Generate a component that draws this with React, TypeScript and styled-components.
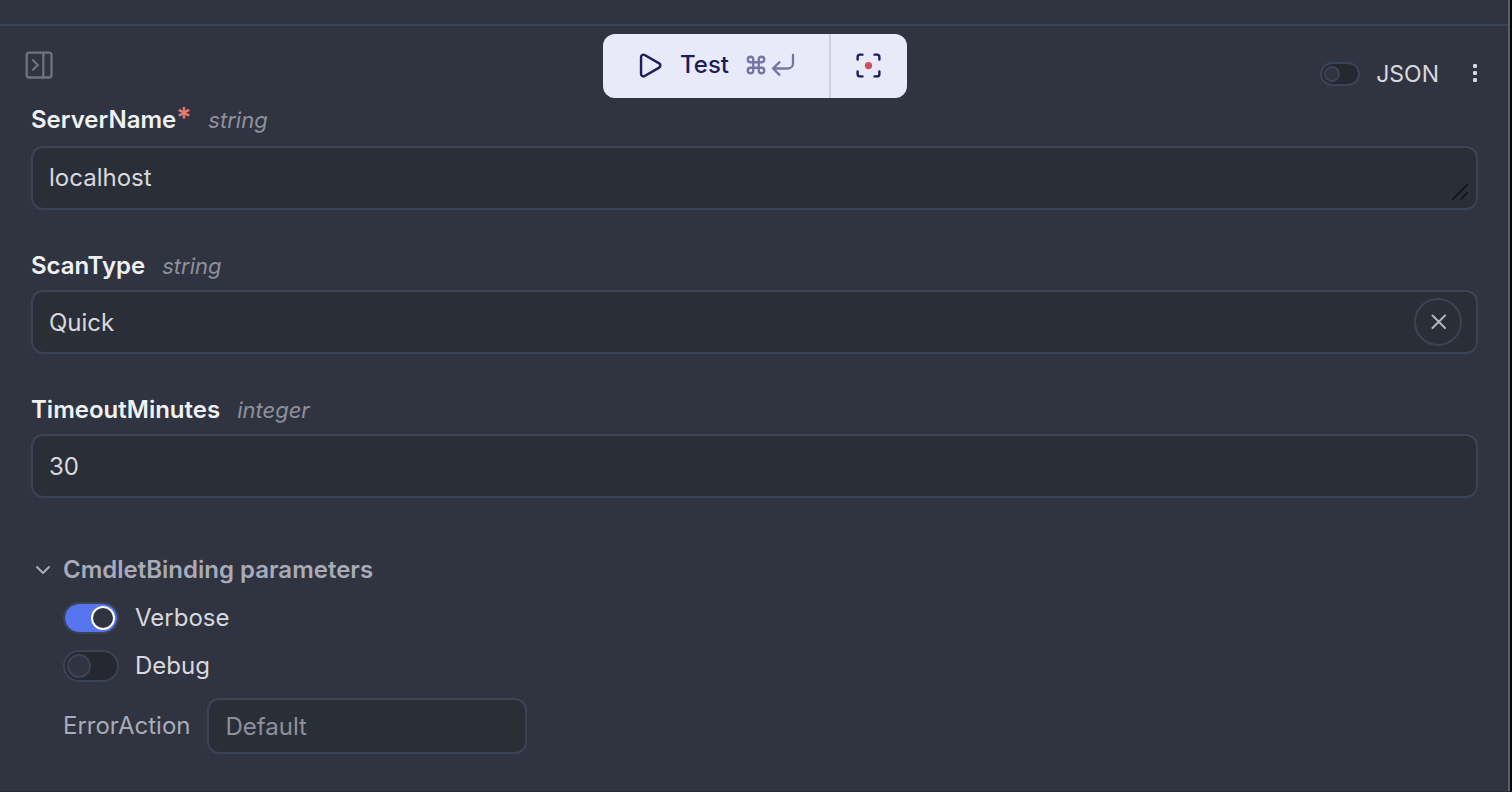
import React, { useState } from "react";
import styled, { createGlobalStyle } from "styled-components";
import { Command, Scan, Play } from "lucide-react";

const GlobalStyle = createGlobalStyle`
  *, *::before, *::after { box-sizing: border-box; }
  body {
    margin: 0;
    background: #303440;
    color: #d8d9de;
    font-family: Inter, "Liberation Sans", sans-serif;
    font-size: 24px;
    line-height: 32px;
  }
  button, input, textarea { font: inherit; color: inherit; margin: 0; }
  button { padding: 0; border: 0; background: none; cursor: pointer; }
  svg { display: block; flex: none; }
`;

const Page = styled.div`
  min-height: 100vh;
  display: flex;
  flex-direction: column;
  border-right: 2px solid #08090b;
  border-bottom: 1px solid #2a2b34;
`;

const Panel = styled.main`
  flex: 1;
  border-right: 2px solid #5b5d67;
`;

const TopStrip = styled.div`
  height: 26px;
  border-bottom: 2px solid #3b4455;
`;

const Toolbar = styled.header`
  display: grid;
  grid-template-columns: 1fr auto 1fr;
  align-items: center;
  padding: 8px 23px 0 25px;
`;

const CollapseButton = styled.button`
  justify-self: start;
  padding-bottom: 2px;
  color: #6f727f;
`;

const TestGroup = styled.div`
  display: flex;
  height: 64px;
  border-radius: 12px;
  overflow: hidden;
  background: #e8eafa;
  color: #1b1d5c;
`;

const TestButton = styled.button`
  display: flex;
  align-items: center;
  gap: 16px;
  padding: 0 34px 2px 32px;
  font-weight: 500;
`;

const Shortcut = styled.span`
  display: flex;
  align-items: center;
  gap: 4px;
  color: #7375a3;
`;

const CaptureButton = styled.button`
  display: flex;
  align-items: center;
  justify-content: center;
  width: 78px;
  padding-bottom: 2px;
  border-left: 2px solid #d0d1d9;
`;

const ViewOptions = styled.div`
  justify-self: end;
  display: flex;
  align-items: center;
  gap: 26px;
  padding-top: 16px;
`;

const MenuButton = styled.button`
  display: flex;
  justify-content: center;
  width: 20px;
  padding-bottom: 2px;
`;

const SwitchLabel = styled.label<{ $small?: boolean }>`
  display: flex;
  align-items: center;
  gap: 16px;
  font-size: ${(p) => (p.$small ? 23 : 24)}px;
  cursor: pointer;
`;

const Switch = styled.input.attrs({ type: "checkbox", role: "switch" })<{ $small?: boolean }>`
  appearance: none;
  display: flex;
  align-items: center;
  flex: none;
  width: ${(p) => (p.$small ? 40 : 56)}px;
  height: ${(p) => (p.$small ? 24 : 32)}px;
  padding: 0 2px;
  border: 2px solid #3b4455;
  border-radius: 16px;
  background: #262831;
  cursor: pointer;

  &::before {
    content: "";
    width: ${(p) => (p.$small ? 16 : 24)}px;
    height: ${(p) => (p.$small ? 16 : 24)}px;
    border: 2px solid #3b4455;
    border-radius: 50%;
    background: #303440;
  }
  &:checked {
    justify-content: flex-end;
    background: #5875f0;
    background-clip: padding-box;
  }
  &:checked::before { border-color: #ffffff; }
`;

const Form = styled.form`
  padding: 6px 30px 36px 31px;
`;

const Field = styled.div<{ $gap?: number }>`
  display: flex;
  flex-direction: column;
  gap: ${(p) => p.$gap ?? 8}px;
  margin-bottom: 40px;
`;

const FieldHead = styled.div`
  display: flex;
  align-items: baseline;
  gap: 17px;
`;

const FieldLabel = styled.label`
  font-weight: 600;
  color: #f0f1f4;
`;

const Required = styled.span`
  font-size: 28px;
  line-height: 0;
  color: #ea7a74;
`;

const TypeName = styled.span`
  font-size: 22px;
  font-style: italic;
  color: #8e919c;
`;

const Control = styled.div`
  position: relative;
  display: flex;
`;

const TextInput = styled.input`
  flex: 1;
  min-width: 0;
  height: 64px;
  padding: 0 16px;
  border: 2px solid #3b4455;
  border-radius: 12px;
  background: #2a2e37;
  outline: none;
`;

const TextArea = styled(TextInput).attrs({ as: "textarea" })`
  padding: 14px 16px;
  resize: none;
  overflow: hidden;
`;

const ResizeGrip = styled.svg`
  position: absolute;
  right: 9px;
  bottom: 9px;
  color: #14161b;
`;

const ClearButton = styled.button`
  position: absolute;
  right: 16px;
  top: 8px;
  display: flex;
  align-items: center;
  justify-content: center;
  width: 48px;
  height: 48px;
  border: 2px solid #3b4455;
  border-radius: 50%;
  color: #b4b6c0;
`;

const Section = styled.section`
  padding-top: 16px;
`;

const SectionToggle = styled.button`
  display: flex;
  align-items: center;
  gap: 8px;
  font-weight: 600;
  color: #a9acb8;
`;

const SectionBody = styled.div`
  display: flex;
  flex-direction: column;
  align-items: flex-start;
  gap: 16px;
  padding: 16px 0 0 32px;
`;

const InlineField = styled.div`
  display: flex;
  align-items: center;
  gap: 17px;
`;

const InlineLabel = styled.label`
  color: #a9acb8;
`;

const CompactInput = styled(TextInput)`
  flex: none;
  width: 320px;
  height: 56px;
  &::placeholder { color: #8e919c; opacity: 1; }
`;

const stroke = {
  fill: "none",
  stroke: "currentColor",
  strokeWidth: 2,
  strokeLinecap: "round" as const,
  strokeLinejoin: "round" as const,
};

export default function App() {
  const [scanType, setScanType] = useState("Quick");
  const [open, setOpen] = useState(true);

  return (
    <>
      <GlobalStyle />
      <Page>
        <Panel>
          <TopStrip />
          <Toolbar>
            <CollapseButton type="button" aria-label="Collapse panel">
              <svg width="28" height="28" viewBox="0 0 28 28" {...stroke} strokeWidth={2.3}>
                <rect x="1.7" y="1.7" width="24.8" height="24.8" rx="2.5" />
                <path d="M18.3 2v24.500M8 9.300l4.800 4.700L8 18.700" />
              </svg>
            </CollapseButton>
            <TestGroup>
              <TestButton type="button">
                <Play size={29} strokeWidth={2} />
                Test
                <Shortcut>
                  <Command size={22} strokeWidth={2.5} />
                  <svg width="24" height="24" viewBox="0 0 24 24" {...stroke} strokeWidth={2.3}>
                    <path d="M22 2v8.500a5 5 0 0 1-5 5H2M8.500 9.200L2 15.500l6.500 6.300" />
                  </svg>
                </Shortcut>
              </TestButton>
              <CaptureButton type="button" aria-label="Capture">
                <Scan size={29} strokeWidth={2}>
                  <circle cx="12" cy="12" r="3" fill="#cd5158" stroke="none" />
                </Scan>
              </CaptureButton>
            </TestGroup>
            <ViewOptions>
              <SwitchLabel $small>
                <Switch $small />
                JSON
              </SwitchLabel>
              <MenuButton type="button" aria-label="More options">
                <svg width="4" height="18" viewBox="0 0 4 18" fill="currentColor">
                  <rect width="4" height="4" rx="1.300" />
                  <rect y="7" width="4" height="4" rx="1.300" />
                  <rect y="14" width="4" height="4" rx="1.300" />
                </svg>
              </MenuButton>
            </ViewOptions>
          </Toolbar>

          <Form onSubmit={(e) => e.preventDefault()}>
            <Field $gap={10}>
              <FieldHead>
                <FieldLabel htmlFor="server">
                  ServerName<Required>*</Required>
                </FieldLabel>
                <TypeName>string</TypeName>
              </FieldHead>
              <Control>
                <TextArea id="server" defaultValue="localhost" />
                <ResizeGrip width="18" height="18" viewBox="0 0 18 18" {...stroke}>
                  <path d="M2 16L16 2M10 16l6-6" />
                </ResizeGrip>
              </Control>
            </Field>

            <Field>
              <FieldHead>
                <FieldLabel htmlFor="scan">ScanType</FieldLabel>
                <TypeName>string</TypeName>
              </FieldHead>
              <Control>
                <TextInput id="scan" value={scanType} onChange={(e) => setScanType(e.target.value)} />
                <ClearButton type="button" aria-label="Clear" onClick={() => setScanType("")}>
                  <svg width="16" height="16" viewBox="0 0 16 16" {...stroke}>
                    <path d="M2.500 1.500l12.500 12.500M15 1.500L2.500 14" />
                  </svg>
                </ClearButton>
              </Control>
            </Field>

            <Field>
              <FieldHead>
                <FieldLabel htmlFor="timeout">TimeoutMinutes</FieldLabel>
                <TypeName>integer</TypeName>
              </FieldHead>
              <Control>
                <TextInput id="timeout" inputMode="numeric" defaultValue="30" />
              </Control>
            </Field>

            <Section>
              <SectionToggle type="button" aria-expanded={open} onClick={() => setOpen(!open)}>
                <svg width="24" height="24" viewBox="0 0 24 24" {...stroke}>
                  <path d="M6 9l6 6 6-6" />
                </svg>
                CmdletBinding parameters
              </SectionToggle>
              {open && (
                <SectionBody>
                  <SwitchLabel>
                    <Switch defaultChecked />
                    Verbose
                  </SwitchLabel>
                  <SwitchLabel>
                    <Switch />
                    Debug
                  </SwitchLabel>
                  <InlineField>
                    <InlineLabel htmlFor="action">ErrorAction</InlineLabel>
                    <CompactInput id="action" placeholder="Default" />
                  </InlineField>
                </SectionBody>
              )}
            </Section>
          </Form>
        </Panel>
      </Page>
    </>
  );
}
